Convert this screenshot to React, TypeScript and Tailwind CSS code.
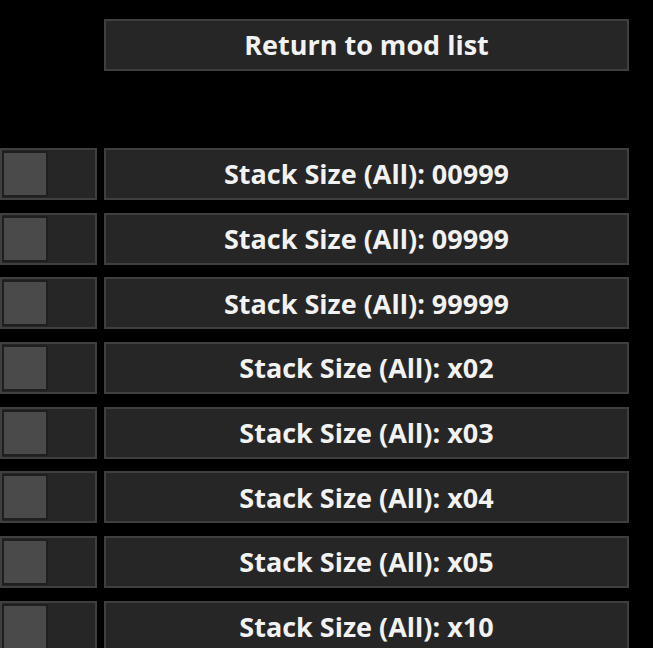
import React from "react";

const rows = ["00999", "09999", "99999", "x02", "x03", "x04", "x05", "x10"];

export default function App() {
  return (
    <div
      className="w-[653px] h-[648px] overflow-hidden bg-black text-[#f2f2f2]"
      style={{ fontFamily: '"Open Sans", "Noto Sans", sans-serif' }}
    >
      <div className="pt-[19px] pl-[104px] w-[629px]">
        <div className="h-[52px] flex items-center justify-center bg-[#262626] border-2 border-[#3f3f3f] text-[27px] font-bold pt-[1px]">
          Return to mod list
        </div>
      </div>
      <div className="mt-[77px] flex flex-col gap-[12.67px] w-[629px]">
        {rows.map((r) => (
          <div key={r} className="flex h-[52px] gap-[7px]">
            <div className="w-[97px] shrink-0 bg-[#262626] border-2 border-[#3f3f3f] flex items-center">
              <div className="w-[46px] h-[46px] border-2 border-[#1f1f1f] bg-[#4a4a4a]" />
            </div>
            <div className="flex-1 flex items-center justify-center bg-[#262626] border-2 border-[#3f3f3f] text-[27px] font-bold pt-[1px]">
              Stack Size (All): {r}
            </div>
          </div>
        ))}
      </div>
    </div>
  );
}
